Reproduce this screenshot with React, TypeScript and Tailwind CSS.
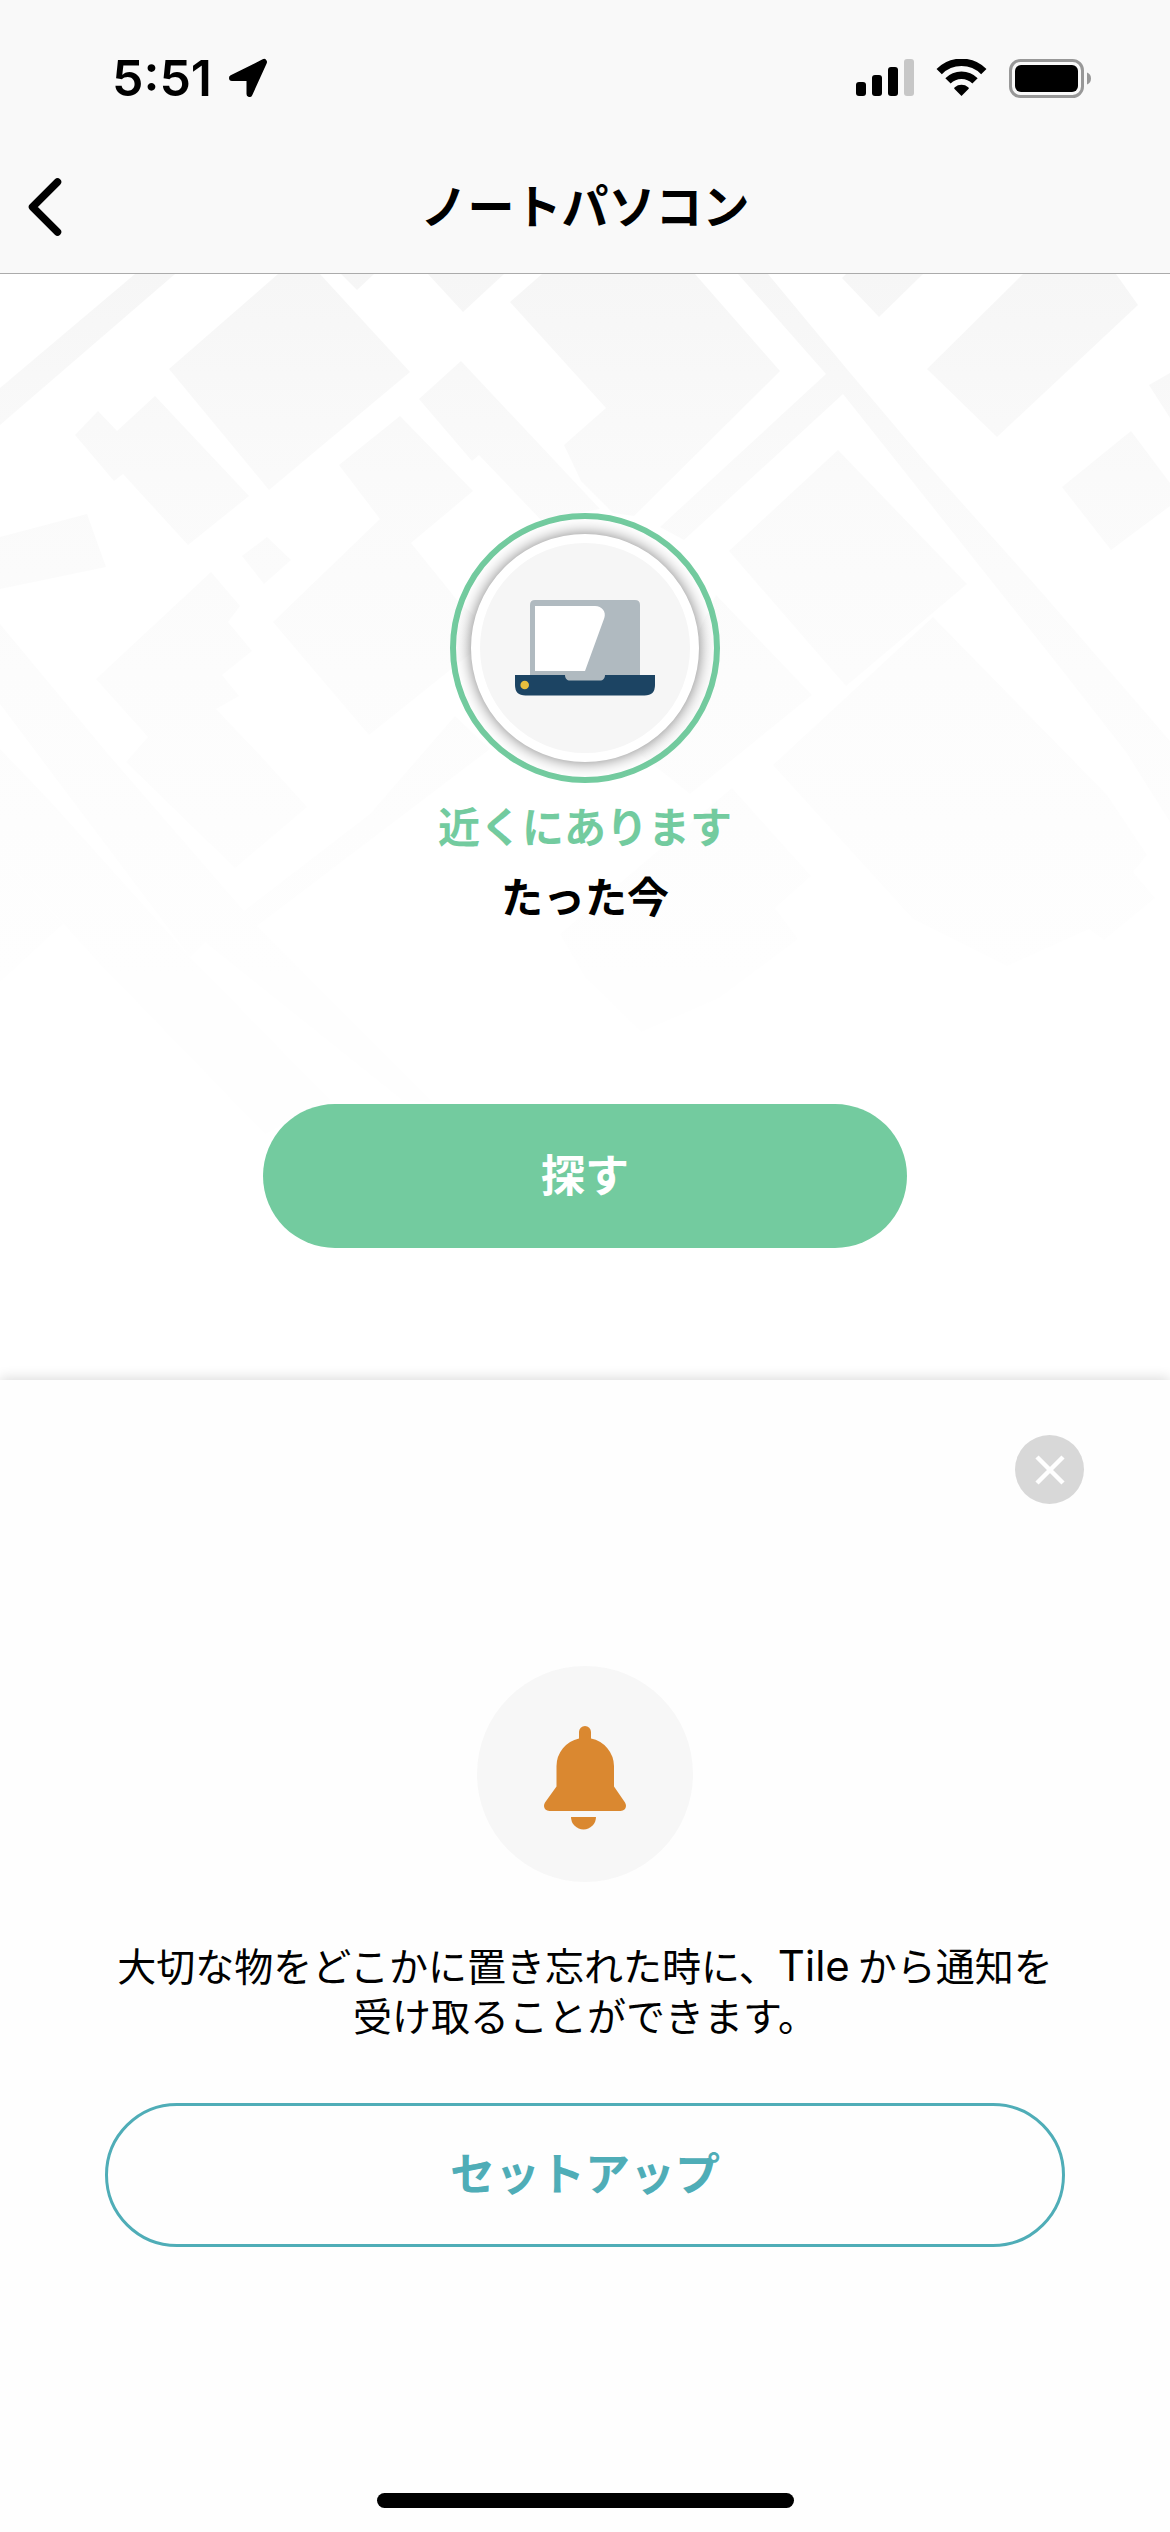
const blocks = [
  "135,0 175,0 0,151 0,114",
  "278,0 320,0 410,98 269,216 169,95",
  "341,0 374,0 357,16",
  "428,0 504,0 463,38",
  "542,0 695,0 780,97 634,242 613,239 581,207 564,171 606,134 510,28",
  "738,0 768,0 846,94 921,183 1044,321 1170,467 1170,548 1126,478 1051,382 843,120 684,266 660,253 826,100",
  "842,4 846,0 923,0 879,43",
  "1023,0 1116,0 1138,31 997,163 927,95",
  "1149,111 1170,99 1170,144",
  "1131,157 1170,209 1170,232 1111,276 1062,213",
  "838,176 967,310 846,412 729,277",
  "933,343 1107,521 1147,581 1133,598 1155,624 1104,666 1089,655 1007,692 913,645 773,491",
  "155,122 249,222 188,271 123,200 114,207 75,161 98,137 117,157",
  "461,87 600,235 541,246 479,181 472,187 419,125",
  "400,142 473,217 411,269 457,326 495,360 369,461 273,348 380,245 339,191",
  "267,263 291,286 264,310 242,282",
  "211,298 240,332 228,348 252,377 222,401 239,422 216,435 258,479 307,533 235,594 126,488 148,463 96,405",
  "87,240 106,293 0,315 0,263",
  "0,350 108,480 244,637 370,540 455,442 490,475 257,652 433,828 402,826 205,668 190,683 0,430",
  "0,475 49,526 190,683 330,826 265,860 100,690 0,580",
  "716,321 812,421 690,520 640,480",
  "732,514 811,602 775,634 798,665 719,724 641,758 585,703 560,660",
  "63,650 0,708 0,580",
];

function MapBackdrop() {
  return (
    <svg
      className="absolute inset-0 h-full w-full"
      viewBox="0 0 1170 1106"
      preserveAspectRatio="xMidYMin slice"
      aria-hidden="true"
    >
      <defs>
        <linearGradient id="fade" gradientUnits="userSpaceOnUse" x1="0" y1="0" x2="0" y2="1000">
          <stop offset="0" stopColor="#f6f6f6" />
          <stop offset="0.2" stopColor="#fafafa" />
          <stop offset="0.4" stopColor="#fcfcfc" />
          <stop offset="0.55" stopColor="#fdfdfd" />
          <stop offset="0.7" stopColor="#fefefe" />
          <stop offset="1" stopColor="#fefefe" />
        </linearGradient>
      </defs>
      <g fill="url(#fade)">
        {blocks.map((points) => (
          <polygon key={points} points={points} />
        ))}
      </g>
    </svg>
  );
}

function LocationArrow() {
  return (
    <svg width="40" height="40" viewBox="0 0 40 40" aria-hidden="true">
      <path
        d="M4 20 L36 4 L21.500 36 V20 Z"
        fill="#000"
        stroke="#000"
        strokeWidth="6"
        strokeLinejoin="round"
      />
    </svg>
  );
}

function Signal() {
  return (
    <svg width="58" height="38" viewBox="0 0 58 38" aria-label="電波">
      <rect x="0" y="23" width="10" height="14" rx="3" />
      <rect x="16" y="16" width="10" height="21" rx="3" />
      <rect x="32" y="8" width="10" height="29" rx="3" />
      <rect x="48" y="0" width="10" height="37" rx="3" fill="#c7c7c7" />
    </svg>
  );
}

function Wifi() {
  return (
    <svg width="51" height="38" viewBox="0 0 51 38" aria-label="Wi-Fi">
      <g fill="none" stroke="#000" strokeWidth="7.500">
        <path d="M3.200 12.600 A31.500 31.500 0 0 1 47.800 12.600" />
        <path d="M12 21.800 A19 19 0 0 1 39 21.800" />
      </g>
      <path d="M25.500 37 L18.300 29.800 Q17.800 29 18.800 28.200 A10.500 10.500 0 0 1 32.200 28.200 Q33.200 29 32.700 29.800 Z" />
    </svg>
  );
}

function Battery() {
  return (
    <svg width="83" height="39" viewBox="0 0 83 39" aria-label="バッテリー">
      <rect x="1.500" y="1.500" width="72" height="36" rx="10" fill="none" stroke="#989898" strokeWidth="3" />
      <rect x="6" y="6" width="63" height="27" rx="6" />
      <path d="M78 13.500 A6.500 6.500 0 0 1 78 25.500 Z" fill="#989898" />
    </svg>
  );
}

function Laptop() {
  return (
    <svg width="140" height="96" viewBox="0 0 140 96" aria-hidden="true">
      <path d="M15 82 V5 Q15 0 20 0 H120 Q125 0 125 5 V82 Z" fill="#b0bac0" />
      <path d="M20 6 H80 C87 6 91.500 12 89.300 18 L70 71 H20 Z" fill="#fff" />
      <path
        d="M0 75 H50 C50 78.500 52 80.500 55 80.500 H85 C88 80.500 90 78.500 90 75 H140 V85 Q140 95.500 129.500 95.500 H10.500 Q0 95.500 0 85 Z"
        fill="#1c4463"
      />
      <circle cx="9.700" cy="85" r="4.300" fill="#e8be3e" />
    </svg>
  );
}

function Bell() {
  return (
    <svg width="82" height="104" viewBox="0 0 82 104" fill="#da8830" aria-hidden="true">
      <path d="M35 12.500 V6 A6 6 0 0 1 47 6 V12.500 A28.500 28.500 0 0 1 70 40 V60.500 L81 76.500 C83.500 80.500 81 85 76.500 85 H5.500 C1 85 -1.500 80.500 1 76.500 L12.500 60.500 V40 A28.500 28.500 0 0 1 35 12.500 Z" />
      <path d="M27 91 H52 A12.500 12.500 0 0 1 27 91 Z" />
    </svg>
  );
}

export default function App() {
  return (
    <div
      lang="ja"
      className="flex min-h-screen flex-col bg-[#fefefe] font-['Inter','Noto_Sans_CJK_JP',sans-serif] text-black"
    >
      <header className="border-b border-[#ababab] bg-[#f9f9f9]">
        <div className="flex h-[156px] items-center justify-between pr-[78px] pl-28">
          <div className="flex items-center gap-4">
            <time className="text-[50px] leading-none font-semibold">5:51</time>
            <LocationArrow />
          </div>
          <div className="flex items-center gap-[22px]">
            <Signal />
            <Wifi />
            <Battery />
          </div>
        </div>
        <nav className="grid h-[117px] grid-cols-[1fr_auto_1fr] items-start">
          <button type="button" aria-label="戻る" className="w-24 pt-[22px] pl-7">
            <svg width="34" height="58" viewBox="0 0 34 58" fill="none" aria-hidden="true">
              <path
                d="M29.500 4 L4.500 29 L29.500 54"
                stroke="#000"
                strokeWidth="7.500"
                strokeLinecap="round"
                strokeLinejoin="round"
              />
            </svg>
          </button>
          <h1 className="pt-[18px] text-[47px] leading-[66px] font-bold">ノートパソコン</h1>
        </nav>
      </header>

      <main className="flex flex-1 flex-col">
        <section className="relative flex h-[1106px] flex-col items-center bg-white pt-[239px]">
          <MapBackdrop />
          <div className="relative flex size-[270px] items-center justify-center rounded-full border-[6px] border-[#73cb9f]">
            <div className="flex size-[228px] items-center justify-center rounded-full border-[9px] border-white bg-[#f6f6f6] shadow-[0_0_15px_rgba(0,0,0,0.5)]">
              <Laptop />
            </div>
          </div>
          <p className="relative mt-3 text-[42px] leading-[66px] font-bold text-[#73cb9f]">近くにあります</p>
          <p className="relative mt-1 text-[42px] leading-[66px] font-bold">たった今</p>
          <button
            type="button"
            className="relative mt-[173px] h-36 w-[55%] rounded-full bg-[#73cb9f] text-[44px] font-bold text-white"
          >
            探す
          </button>
        </section>

        <section className="relative flex flex-1 flex-col items-center bg-[#fefefe] px-[105px] pt-[55px] pb-6 shadow-[0_-2px_12px_rgba(0,0,0,0.14)]">
          <button
            type="button"
            aria-label="閉じる"
            className="-mr-[19px] flex size-[69px] items-center justify-center self-end rounded-full bg-[#d8d8d8]"
          >
            <svg width="30" height="30" viewBox="0 0 30 30" aria-hidden="true">
              <path d="M2 2 L28 28 M28 2 L2 28" stroke="#fff" strokeWidth="4.500" />
            </svg>
          </button>
          <div className="mt-[162px] flex size-[216px] items-center justify-center rounded-full bg-[#f7f7f7] pt-2">
            <Bell />
          </div>
          <p className="mt-[60px] text-center text-[39px] leading-[50px] font-normal">
            大切な物をどこかに置き忘れた時に、
            <span className="mr-2 text-[42px] leading-none">Tile</span>から通知を
            <br />
            受け取ることができます。
          </p>
          <button
            type="button"
            className="mt-[61px] h-36 w-full rounded-full border-[3px] border-[#4fadb7] text-[45px] font-bold text-[#4fadb7]"
          >
            セットアップ
          </button>
          <div className="mt-auto h-[15px] w-[417px] rounded-full bg-black" />
        </section>
      </main>
    </div>
  );
}
